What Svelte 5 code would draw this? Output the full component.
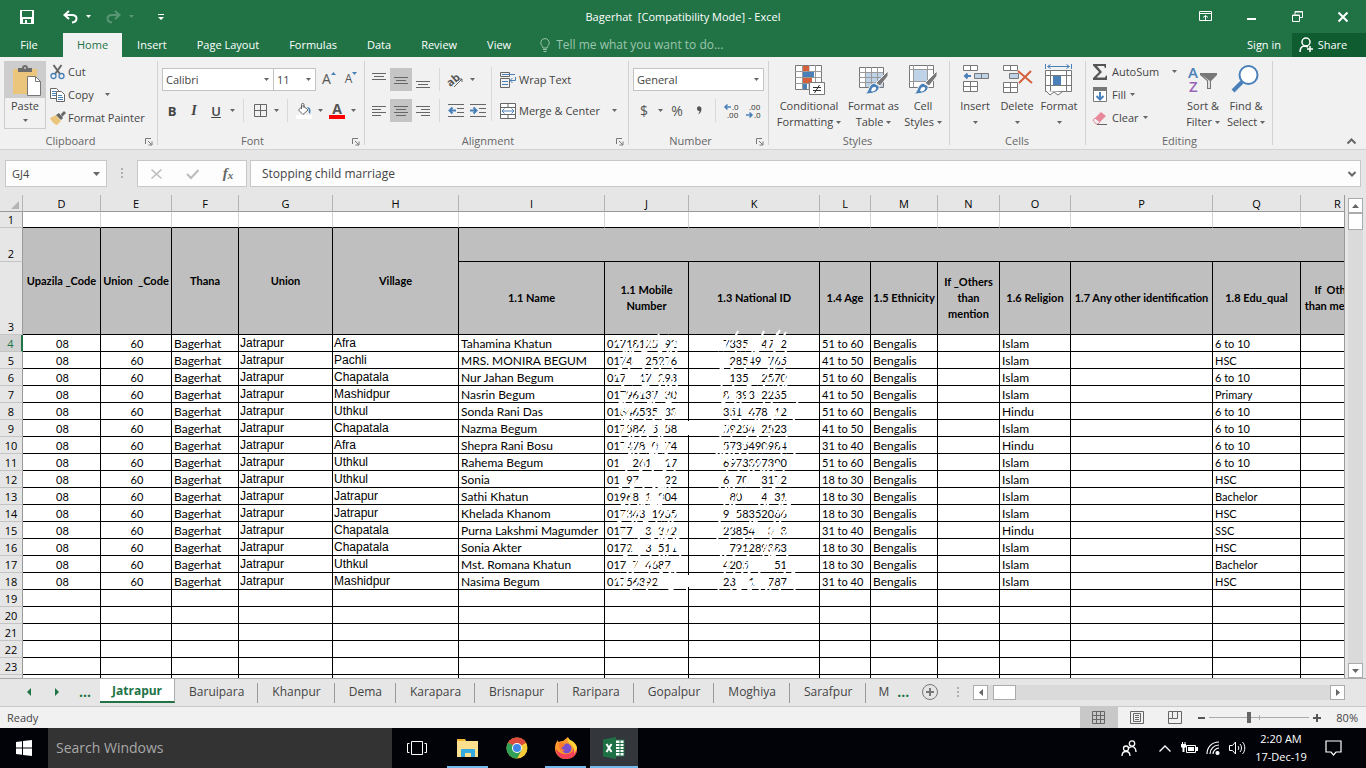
<script>
  const columns = [
    { id: 'D', width: 78 },
    { id: 'E', width: 71 },
    { id: 'F', width: 67 },
    { id: 'G', width: 94 },
    { id: 'H', width: 126 },
    { id: 'I', width: 146 },
    { id: 'J', width: 84 },
    { id: 'K', width: 131 },
    { id: 'L', width: 51 },
    { id: 'M', width: 67 },
    { id: 'N', width: 62 },
    { id: 'O', width: 71 },
    { id: 'P', width: 142 },
    { id: 'Q', width: 88 },
    { id: 'R', width: 74 }
  ]

  const mergedHeads = ['Upazila _Code', 'Union  _Code', 'Thana', 'Union', 'Village']
  const heads = [
    '1.1 Name', '1.1 Mobile\nNumber', '1.3 National ID', '1.4 Age', '1.5 Ethnicity',
    'If _Others\nthan\nmention', '1.6 Religion', '1.7 Any other identification',
    '1.8 Edu_qual', 'If  Others\nthan mention'
  ]

  // village, name, mobile, national id, age, religion, education
  // "_" is a digit that has been wiped out
  const people = [
    ['Afra', 'Tahamina Khatun', '01718125_92', '7335__47_2', '51 to 60', 'Islam', '6 to 10'],
    ['Pachli', 'MRS. MONIRA BEGUM', '0174__25276', '_28549_765', '41 to 50', 'Islam', 'HSC'],
    ['Chapatala', 'Nur Jahan Begum', '017__17_293', '_135__2570', '51 to 60', 'Islam', '6 to 10'],
    ['Mashidpur', 'Nasrin Begum', '01796137_30', '8_393_2235', '41 to 50', 'Islam', 'Primary'],
    ['Uthkul', 'Sonda Rani Das', '01646535_33', '351_478_12', '51 to 60', 'Hindu', '6 to 10'],
    ['Chapatala', 'Nazma Begum', '017584_5_58', '59254_2523', '41 to 50', 'Islam', '6 to 10'],
    ['Afra', 'Shepra Rani Bosu', '017478_0_74', '5735490984', '31 to 40', 'Hindu', '6 to 10'],
    ['Uthkul', 'Rahema Begum', '01__261__17', '6973397390', '51 to 60', 'Islam', '6 to 10'],
    ['Uthkul', 'Sonia', '01_97____22', '6_70__3172', '18 to 30', 'Islam', 'HSC'],
    ['Jatrapur', 'Sathi Khatun', '01968_1_804', '_80___4_31', '18 to 30', 'Islam', 'Bachelor'],
    ['Jatrapur', 'Khelada Khanom', '017343_1935', '9_58352086', '18 to 30', 'Islam', 'HSC'],
    ['Chapatala', 'Purna Lakshmi Magumder', '0177__3_312', '23854__3_3', '31 to 40', 'Hindu', 'SSC'],
    ['Chapatala', 'Sonia Akter', '0172__3_511', '_791289383', '18 to 30', 'Islam', 'HSC'],
    ['Uthkul', 'Mst. Romana Khatun', '017_7_4687_', '4205____51', '18 to 30', 'Islam', 'Bachelor'],
    ['Mashidpur', 'Nasima Begum', '01756392___', '23__1__787', '31 to 40', 'Islam', 'HSC']
  ]
  const wipe = (digits) => digits.replaceAll('_', '\u2007')

  const emptyRows = [19, 20, 21, 22, 23, 24]
  const menu = ['Insert', 'Page Layout', 'Formulas', 'Data', 'Review', 'View']
  const sheets = ['Baruipara', 'Khanpur', 'Dema', 'Karapara', 'Brisnapur', 'Raripara', 'Gopalpur', 'Moghiya', 'Sarafpur']

  // eraser strokes over the two number columns
  let seed = 7
  function rand() {
    seed = (seed * 16807) % 2147483647
    return seed / 2147483647
  }
  function strokes(count, x, w, y, h) {
    let d = ''
    for (let i = 0; i < count; i++) {
      const len = 5 + rand() * 9
      d += `M${(x + rand() * w).toFixed(0)} ${(y + rand() * h).toFixed(0)}l${(len / 2).toFixed(0)} ${(-len).toFixed(0)}`
    }
    return d
  }
  const scratches = strokes(260, 12, 60, 10, 262) + strokes(225, 111, 80, 10, 262) + 'M84 88v14M84 242v12M83 256v14M74 268h8'

  let zoom = $state(80)
</script>

{#snippet arrow()}
  <svg class="arrow" width="5" height="3" viewBox="0 0 5 3"><path d="M0 0h5L2.500 3z" fill="currentColor" /></svg>
{/snippet}

{#snippet launcher()}
  <svg class="launcher" width="8" height="8" viewBox="0 0 8 8" fill="none" stroke="#777"><path d="M.5 6V.5H6M3 3l3.500 3.500M7 3.500V7H3.500" /></svg>
{/snippet}

{#snippet lines(rows)}
  <svg width="16" height="16" viewBox="0 0 16 16" stroke="#666">
    {#each rows as [x1, x2, y]}<path d="M{x1} {y}.5H{x2}" />{/each}
  </svg>
{/snippet}

{#snippet brush()}
  <path d="M30 7v5l-8 10-4-3z" fill="#777" stroke="#f1f1f1" />
  <path d="M16 19l5 3c1 4-3 8-14 8 4-2 3-9 9-11z" fill="#4a80b8" stroke="#f1f1f1" />
  <path d="M14 24c2-2 5-1 4 1-1 2-3 3-5 2z" fill="#fff" />
{/snippet}

<div class="app">
  <header>
    <div class="titlebar">
      <div class="quick">
        <button class="q-save" aria-label="Save">
          <svg width="14" height="14" viewBox="0 0 14 14"><path fill-rule="evenodd" d="M0 0h14v14H0zM2 1v6h10V1zM3 9v4h2v-3h2v3h4V9z" fill="#fff" /></svg>
        </button>
        <button class="q-undo" aria-label="Undo">
          <svg width="15" height="14" viewBox="0 0 15 14" fill="none" stroke="#fff" stroke-width="2"><path d="M6 1L1.500 5 6 9M2 5h7c6 0 6 7 0 7.500" /></svg>
        </button>
        <button class="q-more" aria-label="Undo history">{@render arrow()}</button>
        <button class="q-undo dim" aria-label="Redo">
          <svg width="15" height="14" viewBox="0 0 15 14" fill="none" stroke="#fff" stroke-width="2"><path d="M9 1l4.500 4L9 9M13 5H6C0 5 0 12 6 12.500" /></svg>
        </button>
        <button class="q-more dim" aria-label="Redo history">{@render arrow()}</button>
        <button class="q-custom" aria-label="Customize toolbar">
          <svg width="6" height="6" viewBox="0 0 6 6"><path d="M0 0h6v1H0zM0 3h6L3 6z" fill="#fff" /></svg>
        </button>
      </div>
      <div class="title">Bagerhat&nbsp; [Compatibility Mode] - Excel</div>
      <div class="window-buttons">
        <button aria-label="Ribbon display options">
          <svg width="13" height="11" viewBox="0 0 13 11" fill="none" stroke="#fff"><path d="M.5.5h12v9H.5zM.5 2.500h12M6.500 9V4.500M4 6.500l2.500-2 2.500 2" /></svg>
        </button>
        <button aria-label="Minimize"><svg width="9" height="10" viewBox="0 0 9 10"><path d="M0 6h9v2H0z" fill="#fff" /></svg></button>
        <button aria-label="Restore">
          <svg width="11" height="11" viewBox="0 0 11 11" fill="none" stroke="#fff"><path d="M.5 4h7v6.500h-7zM0 4.500h8M3 3.500V.5h7.500v6H8M3 1h8" /></svg>
        </button>
        <button aria-label="Close"><svg width="10" height="10" viewBox="0 0 10 10" stroke="#fff" stroke-width="2"><path d="M.5.5l9 9M9.500.5l-9 9" /></svg></button>
      </div>
    </div>

    <nav class="menu">
      <button class="file">File</button>
      <button class="active">Home</button>
      {#each menu as item}
        <button>{item}</button>
      {/each}
      <label class="tell">
        <svg width="10" height="14" viewBox="0 0 10 14" fill="none" stroke="#9cc5ad"><path d="M3 10C3 8 .8 7.500.8 4.800a4.200 4.200 0 018.400 0C9.200 7.500 7 8 7 10zM3 11.500h4M3.500 13.500h3" /></svg>
        <input placeholder="Tell me what you want to do..." />
      </label>
      <button class="signin">Sign in</button>
      <button class="share">
        <svg width="15" height="16" viewBox="0 0 15 16" fill="none" stroke="#fff" stroke-width="1.500"><circle cx="7" cy="5" r="4" /><path d="M1 15c0-4 2-6 5-6l3 1M11 9v6M8 12h6" /></svg>
        Share
      </button>
    </nav>
  </header>

  <section class="ribbon">
    <div class="group clipboard">
      <div class="content">
        <button class="paste">
          <span class="paste-icon">
            <svg width="30" height="32" viewBox="0 0 30 32">
              <path d="M1 5h24v25H1z" fill="#ecc57c" />
              <path d="M6 8V4h4c0-4 6-4 6 0h4v4z" fill="#6d6d6d" />
              <circle cx="13" cy="4" r="1" fill="#cdcdcd" />
              <path d="M15.500 12.500h8l5 5v14h-13z" fill="#fff" stroke="#777" />
              <path d="M23.500 12.500v5h5" fill="none" stroke="#777" />
            </svg>
          </span>
          <span>Paste</span>
          {@render arrow()}
        </button>
        <div class="stack">
          <button>
            <svg width="16" height="16" viewBox="0 0 16 16" fill="none"><path d="M3.500 1l6.500 9M11.500 1L5 10" stroke="#666" stroke-width="2" /><circle cx="3.500" cy="12" r="2.500" stroke="#4a80b8" stroke-width="1.300" /><circle cx="11.500" cy="12" r="2.500" stroke="#4a80b8" stroke-width="1.300" /></svg>
            Cut
          </button>
          <button>
            <svg width="16" height="16" viewBox="0 0 16 16" fill="#fff" stroke="#666"><path d="M.5 1.500h6l2 2v8h-8z" /><path d="M2 4.500h4M2 6.500h4M2 8.500h4" stroke="#4a80b8" /><path d="M6.500 4.500h5l3 3v7h-8z" /><path d="M8 8.500h4M8 10.500h5M8 12.500h5" stroke="#4a80b8" /></svg>
            Copy <span class="gap">{@render arrow()}</span>
          </button>
          <button>
            <svg width="16" height="16" viewBox="0 0 16 16"><path d="M0 8l6-3 5 6-4 4c-2 0-5-3-7-7z" fill="#ecc57c" /><path d="M6 5l3-2 4 5-2 2zM11 4l3-3 2 2-4 4z" fill="#666" /></svg>
            Format Painter
          </button>
        </div>
      </div>
      <div class="caption launch">Clipboard {@render launcher()}</div>
    </div>

    <div class="group font">
      <div class="content rows">
        <div class="row">
          <span class="select font-name">
            <select aria-label="Font"><option>Calibri</option></select>{@render arrow()}
          </span>
          <span class="select font-size">
            <select aria-label="Font size"><option>11</option></select>{@render arrow()}
          </span>
          <button class="icon grow" aria-label="Increase font size">A<svg width="5" height="3" viewBox="0 0 5 3"><path d="M0 3h5L2.500 0z" fill="#4a80b8" /></svg></button>
          <button class="icon grow shrink" aria-label="Decrease font size">A<svg width="5" height="3" viewBox="0 0 5 3"><path d="M0 0h5L2.500 3z" fill="#4a80b8" /></svg></button>
        </div>
        <div class="row">
          <button class="icon glyph"><b>B</b></button>
          <button class="icon glyph"><i>I</i></button>
          <button class="icon glyph"><u>U</u></button>
          <button class="drop" aria-label="Underline style">{@render arrow()}</button>
          <span class="sep"></span>
          <button class="icon" aria-label="Borders">
            <svg width="13" height="13" viewBox="0 0 13 13" fill="none" stroke="#666"><path d="M.5.5h12v12H.5zM6.500.5v12M.5 6.500h12" /></svg>
          </button>
          <button class="drop" aria-label="Border style">{@render arrow()}</button>
          <span class="sep"></span>
          <button class="icon" aria-label="Fill color">
            <svg width="16" height="16" viewBox="0 0 16 16"><path d="M2.500 7L7 2.500l5 4.500-5 4.500z" fill="#fff" stroke="#666" /><path d="M5.500 6V1.500c0-1.500 2.500-1.500 2.500 0V5" fill="none" stroke="#666" /><path d="M11 4c4 0 4 4 3 7-1-1-2-2-1-4z" fill="#4a80b8" /><path d="M0 12h16v4H0z" fill="#fff" /></svg>
          </button>
          <button class="drop" aria-label="Fill colors">{@render arrow()}</button>
          <button class="icon font-color" aria-label="Font color"><b>A</b></button>
          <button class="drop" aria-label="Font colors">{@render arrow()}</button>
        </div>
      </div>
      <div class="caption launch">Font {@render launcher()}</div>
    </div>

    <div class="group alignment">
      <div class="content">
        <div class="rows">
          <div class="row">
            <button class="icon" aria-label="Top align">{@render lines([[1, 15, 1], [3, 13, 4], [1, 15, 7]])}</button>
            <button class="icon on" aria-label="Middle align">{@render lines([[1, 15, 5], [3, 13, 8], [1, 15, 11]])}</button>
            <button class="icon" aria-label="Bottom align">{@render lines([[1, 15, 9], [3, 13, 12], [1, 15, 15]])}</button>
            <span class="sep"></span>
            <button class="icon" aria-label="Orientation">
              <svg width="18" height="16" viewBox="0 0 18 16"><text x="0" y="12" font-size="11" font-weight="bold" fill="#555" transform="rotate(-40 6 9)">ab</text><path d="M7 15l8-8M12 7h3v3" fill="none" stroke="#666" /></svg>
            </button>
            <button class="drop" aria-label="Orientation options">{@render arrow()}</button>
          </div>
          <div class="row">
            <button class="icon" aria-label="Align left">{@render lines([[1, 15, 3], [1, 10, 6], [1, 15, 9], [1, 10, 12]])}</button>
            <button class="icon on" aria-label="Center">{@render lines([[1, 15, 3], [3, 13, 6], [1, 15, 9], [3, 13, 12]])}</button>
            <button class="icon" aria-label="Align right">{@render lines([[1, 15, 3], [6, 15, 6], [1, 15, 9], [6, 15, 12]])}</button>
            <span class="sep"></span>
            <button class="icon" aria-label="Decrease indent">
              <svg width="16" height="16" viewBox="0 0 16 16" fill="none" stroke="#666"><path d="M0 1.500h16M9 5.500h7M9 9.500h7M0 13.500h16" /><path d="M8 7.500H2M4.500 4.500l-3 3 3 3" stroke="#4a80b8" stroke-width="2" /></svg>
            </button>
            <button class="icon" aria-label="Increase indent">
              <svg width="16" height="16" viewBox="0 0 16 16" fill="none" stroke="#666"><path d="M0 1.500h16M9 5.500h7M9 9.500h7M0 13.500h16" /><path d="M0 7.500h6M3.500 4.500l3 3-3 3" stroke="#4a80b8" stroke-width="2" /></svg>
            </button>
          </div>
        </div>
        <span class="sep tall"></span>
        <div class="rows wide">
          <button class="row">
            <svg width="16" height="16" viewBox="0 0 16 16" fill="none" stroke="#666"><path d="M.5.5h9v4h-9zM.5 6.500h9v9h-9z" /><path d="M2 2.500h13M2 9.500h6M2 12.500h6M15.500 5v3.500H10M12.500 6L10 8.500l2.500 2.500" stroke="#4a80b8" /></svg>
            Wrap Text
          </button>
          <button class="row">
            <svg width="16" height="16" viewBox="0 0 16 16" fill="#fff" stroke="#666"><path d="M.5.5h15v15H.5zM.5 4.500h15M.5 11.500h15M8 .5v4M8 11.500v4" /><path d="M2 8h12M4.500 5.500L2 8l2.500 2.500M11.500 5.500L14 8l-2.500 2.500" fill="none" stroke="#4a80b8" /></svg>
            Merge &amp; Center <span class="gap">{@render arrow()}</span>
          </button>
        </div>
      </div>
      <div class="caption launch">Alignment {@render launcher()}</div>
    </div>

    <div class="group number">
      <div class="content rows">
        <div class="row">
          <span class="select format">
            <select aria-label="Number format"><option>General</option></select>{@render arrow()}
          </span>
        </div>
        <div class="row">
          <button class="icon sign">$</button>
          <button class="drop" aria-label="Currency">{@render arrow()}</button>
          <button class="icon sign">%</button>
          <button class="icon sign" aria-label="Comma style"><svg width="5" height="9" viewBox="0 0 5 9"><path d="M0 2.500C0-.5 4.500-.5 4.500 3c0 3-2 5-3.500 5.500C2 7 2.500 6 2.500 5 1 5.500 0 4 0 2.500z" fill="#555" /></svg></button>
          <span class="sep"></span>
          <button class="icon" aria-label="Increase decimal">
            <svg width="16" height="16" viewBox="0 0 16 16"><text x="8" y="7" font-size="8" fill="#333">.0</text><text x="3" y="15" font-size="8" fill="#333">.00</text><path d="M7 4H1M3.500 1.500L1 4l2.500 2.500" fill="none" stroke="#4a80b8" stroke-width="1.500" /></svg>
          </button>
          <button class="icon" aria-label="Decrease decimal">
            <svg width="16" height="16" viewBox="0 0 16 16"><text x="3" y="7" font-size="8" fill="#333">.00</text><text x="8" y="15" font-size="8" fill="#333">.0</text><path d="M0 12h6M3.500 9.500L6 12l-2.500 2.500" fill="none" stroke="#4a80b8" stroke-width="1.500" /></svg>
          </button>
        </div>
      </div>
      <div class="caption launch">Number {@render launcher()}</div>
    </div>

    <div class="group styles">
      <div class="content">
        <button class="big conditional">
          <svg width="32" height="32" viewBox="0 0 32 32">
            <path d="M2.500 1.500h26v24h-26z" fill="#fff" stroke="#777" />
            <path d="M9.500 1v25M16 1v25M22.500 1v25M2 7.500h27M2 13.500h27M2 19.500h27" stroke="#999" fill="none" />
            <path d="M10 2h6v5h-6zM10 14h9v5h-9z" fill="#d65f3c" /><path d="M10 8h11v5H10zM10 20h4v5h-4z" fill="#4a80b8" />
            <path d="M16.500 18.500h15v12h-15z" fill="#fff" stroke="#777" />
            <path d="M20 23.500h8M20 26.500h8M26.500 21l-5 8" stroke="#333" />
          </svg>
          <span>Conditional</span><span>Formatting {@render arrow()}</span>
        </button>
        <button class="big table-style">
          <svg width="32" height="32" viewBox="0 0 32 32">
            <path d="M1.500 3.500h24v20h-24z" fill="#fff" stroke="#777" /><path d="M8 9h17v14H8z" fill="#bed2e8" />
            <path d="M7.500 3v20M13.500 3v20M19.500 3v20M1 8.500h24M1 13.500h24M1 18.500h24" stroke="#999" fill="none" />
            {@render brush()}
          </svg>
          <span>Format as</span><span>Table {@render arrow()}</span>
        </button>
        <button class="big cell-style">
          <svg width="32" height="32" viewBox="0 0 32 32">
            <path d="M2.500 1.500h24v22h-24z" fill="#fff" stroke="#777" /><path d="M7 6h14v12H7z" fill="#bed2e8" />
            <path d="M6.500 1v22M20.500 1v22M2 5.500h24M2 17.500h24" stroke="#999" fill="none" />
            {@render brush()}
          </svg>
          <span>Cell</span><span>Styles {@render arrow()}</span>
        </button>
      </div>
      <div class="caption">Styles</div>
    </div>

    <div class="group cells">
      <div class="content">
        <button class="big">
          <svg width="32" height="32" viewBox="0 0 32 32" fill="#fff" stroke="#777">
            <path d="M4.500 1.500h14v5h-14zM11.500 1.500v5M4.500 17.500h14v10h-14zM11.500 17.500v10M4.500 22.500h14" />
            <path d="M15.500 9.500h14v5h-14zM22.500 9.500v5" fill="#bed2e8" /><path d="M12 12H6M8.500 9.500L6 12l2.500 2.500" fill="none" stroke="#4a80b8" stroke-width="2" />
          </svg>
          <span>Insert</span><span>{@render arrow()}</span>
        </button>
        <button class="big">
          <svg width="32" height="32" viewBox="0 0 32 32" fill="#fff" stroke="#777">
            <path d="M2.500 1.500h14v5h-14zM9.500 1.500v5M2.500 18.500h14v10h-14zM9.500 18.500v10M2.500 23.500h14" />
            <path d="M8.500 9.500h9v5h-9z" fill="#bed2e8" /><path d="M17 7l14 12M30 7L18 19" fill="none" stroke="#d65f3c" stroke-width="2" />
          </svg>
          <span>Delete</span><span>{@render arrow()}</span>
        </button>
        <button class="big">
          <svg width="32" height="32" viewBox="0 0 32 32" fill="#fff" stroke="#777">
            <path d="M2.500 6.500h26v21h-26zM7.500 6.500v21M23.500 6.500v21M2.500 11.500h26M2.500 21.500h26" /><path d="M10 12h8v9h-8z" fill="#4a80b8" stroke="none" />
            <path d="M3 27l4 4 4-3 4 3 4-3" />
            <path d="M2.500 0v5M28.500 0v5M5 2.500h21M7.500.5l-3 2 3 2M23.500.5l3 2-3 2" fill="none" stroke="#4a80b8" />
          </svg>
          <span>Format</span><span>{@render arrow()}</span>
        </button>
      </div>
      <div class="caption">Cells</div>
    </div>

    <div class="group editing">
      <div class="content">
        <div class="stack">
          <button>
            <svg width="16" height="16" viewBox="0 0 16 16"><path d="M1 0h13v4h-1l-1-2H5l5 6-5.500 5.500H13l1-2h1V16H1v-2l6-6-6-6.500z" fill="#555" /></svg>
            AutoSum <span class="gap">{@render arrow()}</span>
          </button>
          <button>
            <svg width="16" height="16" viewBox="0 0 16 16"><path d="M1.500 1.500h13v13h-13z" fill="#fff" stroke="#777" /><path d="M1 0h14v4H1z" fill="#777" /><path d="M8 5v7M4.500 9L8 12.500 11.500 9" fill="none" stroke="#4a80b8" stroke-width="2" /></svg>
            Fill {@render arrow()}
          </button>
          <button>
            <svg width="16" height="16" viewBox="0 0 16 16"><path d="M1 10l8-8 5 4-8 8z" fill="#e8899a" /><path d="M1 10l2-2 5 4-2 2H4z" fill="#f1f1f1" stroke="#e8899a" /><path d="M5 14.500h10" stroke="#666" /></svg>
            Clear {@render arrow()}
          </button>
        </div>
        <button class="big sort">
          <svg width="32" height="32" viewBox="0 0 32 32"><text x="1" y="14" font-size="15" font-weight="600" fill="#4a80b8">A</text><text x="2" y="28" font-size="15" font-weight="600" fill="#9866b8">Z</text><path d="M13 9h17v2l-6 6v8h-4v-8l-7-6z" fill="#777" /><path d="M15 11l6 5.500V24h2v-7z" fill="#ddd" /></svg>
          <span>Sort &amp;</span><span>Filter {@render arrow()}</span>
        </button>
        <button class="big find">
          <svg width="32" height="32" viewBox="0 0 32 32"><circle cx="18.500" cy="11" r="9" fill="#fff" stroke="#4a80b8" stroke-width="2" /><path d="M12 18l-9 9" stroke="#4a80b8" stroke-width="4" /></svg>
          <span>Find &amp;</span><span>Select {@render arrow()}</span>
        </button>
      </div>
      <div class="caption">Editing</div>
    </div>
    <button class="collapse" aria-label="Collapse the ribbon">
      <svg width="9" height="6" viewBox="0 0 9 6" fill="none" stroke="#666" stroke-width="2"><path d="M.5 5.500l4-4 4 4" /></svg>
    </button>
  </section>

  <section class="formula">
    <div class="name-box">
      <input aria-label="Name box" value="GJ4" />
      <button aria-label="Names"><svg width="7" height="4" viewBox="0 0 7 4"><path d="M0 0h7L3.500 4z" fill="#666" /></svg></button>
    </div>
    <span class="dots"></span>
    <div class="fx">
      <button aria-label="Cancel"><svg width="11" height="10" viewBox="0 0 11 10" stroke="#bbb" stroke-width="1.500"><path d="M.5.5l10 9M10.500.5l-10 9" /></svg></button>
      <button aria-label="Enter"><svg width="13" height="10" viewBox="0 0 13 10" fill="none" stroke="#bbb" stroke-width="2"><path d="M1 5l4 4 7.500-8" /></svg></button>
      <button class="fn">f<small>x</small></button>
    </div>
    <div class="formula-input">
      <input aria-label="Formula" value="Stopping child marriage" />
      <button aria-label="Expand formula bar"><svg width="8" height="6" viewBox="0 0 8 6" fill="none" stroke="#666" stroke-width="2"><path d="M.5 1L4 4.500 7.500 1" /></svg></button>
    </div>
  </section>

  <main>
    <div class="grid">
      <table>
        <colgroup>
          <col style="width: 23px" />
          {#each columns as col}<col style="width: {col.width}px" />{/each}
        </colgroup>
        <thead>
          <tr>
            <th class="corner" aria-label="Select all"><svg width="8" height="8" viewBox="0 0 8 8"><path d="M8 0v8H0z" fill="#b4b4b4" /></svg></th>
            {#each columns as col}<th>{col.id}</th>{/each}
          </tr>
        </thead>
        <tbody>
          <tr class="first">
            <th>1</th>
            {#each columns as col}<td></td>{/each}
          </tr>
          <tr class="band">
            <th>2</th>
            {#each mergedHeads as head}<td class="head" rowspan="2">{head}</td>{/each}
            <td class="head" colspan="10"></td>
          </tr>
          <tr class="heads">
            <th>3</th>
            {#each heads as head}<td class="head">{head}</td>{/each}
          </tr>
          {#each people as [village, name, mobile, national, age, religion, education], i}
            <tr>
              <th class:current={i === 0}>{i + 4}</th>
              <td class="num center">08</td>
              <td class="num center">60</td>
              <td>Bagerhat</td>
              <td class="arial">Jatrapur</td>
              <td class="arial">{village}</td>
              <td>{name}</td>
              <td class="num">{wipe(mobile)}</td>
              <td class="num center">{wipe(national)}</td>
              <td class="num">{age}</td>
              <td>Bengalis</td>
              <td></td>
              <td>{religion}</td>
              <td></td>
              <td class="num">{education}</td>
              <td></td>
            </tr>
          {/each}
          {#each emptyRows as row}
            <tr>
              <th>{row}</th>
              {#each columns as col}<td></td>{/each}
            </tr>
          {/each}
        </tbody>
      </table>
      <svg class="scratches" width="215" height="280" viewBox="0 0 215 280"><path d={scratches} fill="none" stroke="#fff" stroke-width="2" /></svg>
    </div>
    <div class="vscroll">
      <button aria-label="Scroll up"><svg width="7" height="4" viewBox="0 0 7 4"><path d="M0 4h7L3.500 0z" fill="#666" /></svg></button>
      <span class="thumb"></span>
      <button class="down" aria-label="Scroll down"><svg width="7" height="4" viewBox="0 0 7 4"><path d="M0 0h7L3.500 4z" fill="#666" /></svg></button>
    </div>
  </main>

  <footer>
    <div class="sheets">
      <button class="step" aria-label="Previous sheet"><svg width="4" height="8" viewBox="0 0 4 8"><path d="M4 0v8L0 4z" fill="#217346" /></svg></button>
      <button class="step" aria-label="Next sheet"><svg width="4" height="8" viewBox="0 0 4 8"><path d="M0 0v8l4-4z" fill="#217346" /></svg></button>
      <button class="step more">...</button>
      <button class="sheet current">Jatrapur</button>
      {#each sheets as sheet}
        <button class="sheet">{sheet}</button>
      {/each}
      <button class="sheet cut">M</button>
      <button class="step more">...</button>
      <button class="add" aria-label="New sheet"><svg width="16" height="16" viewBox="0 0 16 16" fill="none" stroke="#777"><circle cx="8" cy="8" r="7.500" /><path d="M8 4v8M4 8h8" stroke-width="2" /></svg></button>
      <span class="dots"></span>
      <div class="hscroll">
        <button aria-label="Scroll left"><svg width="4" height="7" viewBox="0 0 4 7"><path d="M4 0v7L0 3.500z" fill="#666" /></svg></button>
        <span class="thumb"></span>
        <button class="right" aria-label="Scroll right"><svg width="4" height="7" viewBox="0 0 4 7"><path d="M0 0v7l4-3.500z" fill="#666" /></svg></button>
      </div>
    </div>

    <div class="status">
      <span class="ready">Ready</span>
      <button class="view on" aria-label="Normal view"><svg width="14" height="13" viewBox="0 0 14 13" fill="none" stroke="#666"><path d="M.5.5h12v12H.5zM4.500.5v12M8.500.5v12M.5 4.500h12M.5 8.500h12" /></svg></button>
      <button class="view" aria-label="Page layout view"><svg width="14" height="13" viewBox="0 0 14 13" fill="none" stroke="#666"><path d="M.5.5h13v12H.5zM3.500 2.500h7v8h-7zM5 4.500h4M5 6.500h4M5 8.500h4" /></svg></button>
      <button class="view" aria-label="Page break view"><svg width="14" height="13" viewBox="0 0 14 13" fill="none" stroke="#666"><path d="M.5.5h13v12H.5zM4.500.5v7h5v-7M.5 7.500h4" /></svg></button>
      <button class="zoom-step" aria-label="Zoom out"><svg width="7" height="7" viewBox="0 0 7 7"><path d="M0 3h7v2H0z" fill="#555" /></svg></button>
      <input type="range" min="0" max="200" bind:value={zoom} aria-label="Zoom" />
      <button class="zoom-step" aria-label="Zoom in"><svg width="8" height="8" viewBox="0 0 8 8"><path d="M0 3h3V0h2v3h3v2H5v3H3V5H0z" fill="#555" /></svg></button>
      <span class="percent">{zoom}%</span>
    </div>
  </footer>

  <div class="taskbar">
    <button class="start" aria-label="Start"><svg width="16" height="16" viewBox="0 0 16 16"><path d="M0 2l6-.8v6.300H0zM7 1l9-1v7.500H7zM0 8.500h6v6.300L0 14zM7 8.500h9V16l-9-1z" fill="#fff" /></svg></button>
    <input class="search" placeholder="Search Windows" aria-label="Search Windows" />
    <button class="task overview" aria-label="Task view"><svg width="20" height="14" viewBox="0 0 20 14" fill="none" stroke="#fff"><path d="M4.500.5h11v13h-11zM2.500 2.500h-2v9h2M17.500 2.500h2v9h-2" /></svg></button>
    <button class="task open" aria-label="File Explorer">
      <svg width="22" height="22" viewBox="0 0 22 22"><path d="M0 2h8l1 2h12v16H0z" fill="#fde08d" /><path d="M0 2h8v2H0z" fill="#f3b72f" /><path d="M4 20v-7q0-1 1-1h12q1 0 1 1v7h-4v-4H8v4z" fill="#35a9e0" /></svg>
    </button>
    <button class="task" aria-label="Chrome">
      <svg width="22" height="22" viewBox="0 0 22 22"><circle cx="11" cy="11" r="10.500" fill="#f7cb3a" /><path d="M11 11L1.900 5.700a10.500 10.500 0 0118.200 0z" fill="#dd4b3e" /><path d="M1.900 5.700A10.500 10.500 0 0011 21.500l5-9z" fill="#31a056" /><circle cx="11" cy="11" r="5" fill="#fff" /><circle cx="11" cy="11" r="4" fill="#4285e8" /></svg>
    </button>
    <button class="task open" aria-label="Firefox">
      <svg width="24" height="24" viewBox="0 0 24 24"><path d="M12 23C5 23 1 18 1 12c0-3 1-6 3-8 0 1 0 2 1 2 1-1 3-1 4-1 2-1 3-3 5-4 0 2 2 3 4 4 3 2 5 4 5 8 0 6-5 10-11 10z" fill="#ff9a2a" /><path d="M12 23C6 23 2 19 2 13c4 5 9 6 12 5 5-1 6-5 6-10 2 2 3 3 3 6 0 5-5 9-11 9z" fill="#f6405a" /><path d="M14 1c0 2 2 3 4 4 3 2 5 5 5 8l-3 5c1-5-1-8-4-10-2-2-3-4-2-7z" fill="#ffd23a" /><circle cx="12.500" cy="12.500" r="5" fill="#7a4fd0" /><path d="M5 7c2-1 5 0 6 2l-4 3 4 3c-4 1-7-2-6-8z" fill="#ff7a2a" /></svg>
    </button>
    <button class="task open selected" aria-label="Excel">
      <svg width="22" height="22" viewBox="0 0 22 22"><path d="M12 3h9v16h-9z" fill="#fff" stroke="#217346" /><path d="M12 6.500h9M12 9.500h9M12 12.500h9M12 15.500h9M17 3v16" stroke="#217346" /><path d="M0 2.500L13 0v22L0 19.500z" fill="#1e7145" /><path d="M3.500 7l5 8M8.500 7l-5 8" stroke="#fff" stroke-width="2" /></svg>
    </button>
    <div class="tray">
      <button class="people" aria-label="People"><svg width="16" height="17" viewBox="0 0 16 17" fill="none" stroke="#fff" stroke-width="1.300"><circle cx="5" cy="8.500" r="2.500" /><path d="M1 16c0-6 8-6 8 0" /><circle cx="11" cy="3.500" r="2.700" /><path d="M8 8c3-3 7-1 7 4" /></svg></button>
      <button aria-label="Hidden icons"><svg width="12" height="7" viewBox="0 0 12 7" fill="none" stroke="#fff" stroke-width="1.300"><path d="M.5 6.500L6 1l5.500 5.500" /></svg></button>
      <button aria-label="Battery"><svg width="17" height="12" viewBox="0 0 17 12"><path d="M5.500 3.500h9v7h-9z" fill="none" stroke="#fff" /><path d="M7 5h6v4H7zM15 5h2v4h-2zM0 2h5v3L3.500 6v4h-2V6L0 5zM1 0h1v2H1zM3.500 0h1v2h-1z" fill="#fff" /></svg></button>
      <button aria-label="Network"><svg width="14" height="14" viewBox="0 0 14 14" fill="none" stroke="#fff" stroke-width="1.200"><path d="M1 13C1 6 6 1 13 1M4 13c0-5 4-9 9-9M7 13c0-3 3-6 6-6" /><circle cx="11.500" cy="12" r="1.500" fill="#fff" /></svg></button>
      <button aria-label="Volume"><svg width="17" height="14" viewBox="0 0 17 14" fill="none" stroke="#fff"><path d="M.5 4.500h3L6.500 1v12L3.500 9.500h-3zM9 5c1 1 1 3 0 4M11 3c2 2 2 6 0 8M13.500 1c3 3 3 9 0 12" /></svg></button>
      <div class="clock"><span>2:20 AM</span><span>17-Dec-19</span></div>
      <button class="note" aria-label="Notifications"><svg width="17" height="16" viewBox="0 0 17 16" fill="none" stroke="#fff" stroke-width="1.200"><path d="M1 1h15v11h-5l-2.500 3L6 12H1z" /></svg></button>
    </div>
  </div>
</div>

<style>
  :global(body) {
    margin: 0;
    overflow: hidden;
  }

  .app {
    display: flex;
    flex-direction: column;
    height: 100vh;
    background: #e6e6e6;
    color: #444;
    font: 11px/16px 'Open Sans', 'Noto Sans', sans-serif;
  }

  .app :global(*) {
    box-sizing: border-box;
  }

  button,
  input,
  select {
    margin: 0;
    padding: 0;
    border: 0;
    background: none;
    color: inherit;
    font: inherit;
    white-space: nowrap;
  }

  button {
    display: flex;
    align-items: center;
    justify-content: center;
  }

  input {
    min-width: 0;
    outline: none;
  }

  svg {
    flex: none;
    display: block;
    overflow: visible;
  }

  .arrow {
    display: inline-block;
    color: #666;
  }

  header {
    background: #217346;
    color: #fff;
  }

  .titlebar {
    display: grid;
    grid-template-columns: 1fr auto 1fr;
    align-items: center;
    height: 33px;
  }

  .quick {
    display: flex;
    align-items: center;
    height: 30px;
    padding-left: 16px;
  }

  .quick .arrow {
    color: #fff;
  }

  .q-save {
    width: 22px;
    margin-right: 20px;
  }

  .q-undo {
    width: 24px;
  }

  .q-more {
    width: 13px;
    margin-right: 6px;
  }

  .q-custom {
    width: 30px;
    margin-left: 2px;
  }

  .dim {
    opacity: 0.25;
  }

  .window-buttons {
    display: flex;
    justify-content: flex-end;
    height: 30px;
  }

  .window-buttons button {
    width: 46px;
  }

  .menu {
    display: flex;
    height: 24px;
  }

  .menu button {
    padding: 0 15px;
  }

  .menu .file {
    width: 58px;
    margin-right: 5px;
  }

  .menu .active {
    padding: 0 14px;
    background: #f1f1f1;
    color: #217346;
  }

  .tell {
    display: flex;
    align-items: center;
    flex: 1;
    gap: 6px;
    padding-left: 14px;
  }

  .tell input {
    flex: 1;
    font-size: 12px;
  }

  .tell input::placeholder {
    color: #9cc5ad;
    opacity: 1;
  }

  .menu .signin {
    padding: 0 11px;
  }

  .menu .share {
    width: 74px;
    gap: 4px;
    padding: 0 12px 0 0;
    background: #0e5c2f;
  }

  .ribbon {
    display: flex;
    height: 93px;
    padding-top: 4px;
    background: #f1f1f1;
    border-bottom: 1px solid #d2d2d2;
  }

  .group {
    display: flex;
    flex-direction: column;
    flex: none;
    height: 84px;
    border-right: 1px solid #d2d2d2;
  }

  .content {
    display: flex;
    height: 74px;
  }

  .caption {
    display: flex;
    justify-content: center;
    position: relative;
    height: 10px;
    padding-right: 5px;
    line-height: 12px;
    color: #666;
  }

  .caption.launch {
    padding-right: 20px;
  }

  .launcher {
    position: absolute;
    right: 4px;
    top: 3px;
  }

  .clipboard {
    width: 158px;
    padding-left: 4px;
  }

  .font {
    width: 207px;
    padding-left: 3px;
  }

  .alignment {
    width: 264px;
    padding-left: 3px;
  }

  .number {
    width: 140px;
    padding-left: 4px;
  }

  .styles {
    width: 181px;
    padding-left: 2px;
  }

  .cells {
    width: 136px;
    padding-left: 4px;
  }

  .editing {
    width: 187px;
    padding-left: 6px;
  }

  .paste {
    flex-direction: column;
    justify-content: flex-start;
    width: 42px;
    height: 68px;
    border: 1px solid #cdcdcd;
    margin-right: 4px;
  }

  .paste > span {
    margin-bottom: 5px;
  }

  .paste-icon {
    display: flex;
    justify-content: center;
    align-self: stretch;
    height: 36px;
    padding: 2px 0 0 4px;
    background: #cdcdcd;
  }

  .paste > .paste-icon {
    margin-bottom: 0;
  }

  .stack {
    margin-top: -1px;
  }

  .stack button {
    height: 23px;
    gap: 4px;
  }

  .clipboard .stack button {
    gap: 2px;
  }

  .gap {
    display: flex;
    padding-left: 9px;
  }

  .rows {
    display: flex;
    flex-direction: column;
    gap: 8px;
    padding-top: 7px;
  }

  .row {
    display: flex;
    align-items: center;
    height: 23px;
  }

  .wide {
    padding-left: 8px;
  }

  .wide .row {
    gap: 3px;
    justify-content: flex-start;
  }

  .select {
    display: flex;
    align-items: center;
    position: relative;
    height: 23px;
    background: #fff;
    border: 1px solid #c3c3c3;
  }

  .select select {
    appearance: none;
    width: 100%;
    padding-left: 3px;
    outline: none;
  }

  .select .arrow {
    position: absolute;
    right: 4px;
    pointer-events: none;
  }

  .font-name {
    width: 112px;
    margin-left: 1px;
  }

  .font-size {
    width: 43px;
    margin-left: -1px;
    margin-right: 2px;
  }

  .format {
    width: 131px;
  }

  .icon {
    width: 22px;
    height: 23px;
  }

  .icon.on {
    background: #c5c5c5;
  }

  .drop {
    width: 11px;
    height: 23px;
  }

  .sep {
    align-self: stretch;
    width: 1px;
    margin: 0 5px;
    background: #d8d8d8;
  }

  .sep.tall {
    height: 54px;
    margin: 6px 0 0 2px;
    align-self: flex-start;
  }

  .grow {
    align-items: flex-start;
    font-size: 14px;
    line-height: 22px;
    color: #555;
  }

  .grow svg {
    margin-top: 4px;
  }

  .shrink {
    font-size: 12px;
  }

  .glyph {
    font-size: 13px;
    color: #444;
  }

  .glyph i {
    font-family: 'Liberation Serif', serif;
    font-size: 14px;
    font-weight: bold;
  }

  .glyph u {
    font-weight: 600;
  }

  .font-color b {
    width: 16px;
    height: 17px;
    border-bottom: 4px solid #f00;
    font-size: 14px;
    line-height: 14px;
    color: #555;
  }

  .sign {
    font-size: 14px;
    color: #555;
  }

  .big {
    flex-direction: column;
    justify-content: flex-start;
    width: 42px;
    padding-top: 3px;
  }

  .big svg:not(.arrow) {
    margin-bottom: 2px;
  }

  .big .arrow {
    vertical-align: 2px;
  }

  .conditional {
    width: 76px;
  }

  .table-style {
    width: 53px;
  }

  .cell-style {
    width: 46px;
  }

  .editing .stack {
    width: 89px;
  }

  .sort {
    width: 44px;
  }

  .collapse {
    align-self: flex-end;
    width: 30px;
    height: 16px;
    margin-left: auto;
  }

  .formula {
    display: flex;
    align-items: center;
    height: 45px;
    padding: 10px 5px 8px;
  }

  .formula > div {
    display: flex;
    height: 27px;
    background: #fdfdfd;
    border: 1px solid #c8c8c8;
  }

  .name-box {
    width: 102px;
  }

  .name-box input {
    flex: 1;
    padding-left: 6px;
  }

  .name-box button {
    width: 19px;
  }

  .dots {
    width: 2px;
    height: 11px;
    margin: 0 14px;
    background: repeating-linear-gradient(#b0b0b0 0 2px, transparent 2px 4px);
  }

  .formula .fx {
    width: 110px;
    margin-right: 3px;
  }

  .fx button {
    flex: 1;
  }

  .fn {
    font: italic bold 15px 'Liberation Serif', serif;
    color: #666;
  }

  .fn small {
    font-size: 11px;
    padding-top: 3px;
  }

  .formula-input {
    flex: 1;
  }

  .formula-input input {
    flex: 1;
    padding-left: 11px;
    font-size: 12px;
  }

  .formula-input button {
    width: 16px;
  }

  main {
    display: flex;
    flex: 1;
    min-height: 0;
    padding-right: 3px;
  }

  .grid {
    flex: 1;
    position: relative;
    overflow: hidden;
    border-right: 1px solid #999;
    background: #fff;
  }

  table {
    table-layout: fixed;
    width: 1374px;
    border-spacing: 0;
    color: #000;
    font: 12px/14px Lato, 'Open Sans', sans-serif;
  }

  th {
    height: 17px;
    padding: 2px 0 0;
    background: #e6e6e6;
    border-right: 1px solid #b4b4b4;
    border-bottom: 1px solid #999;
    font: 11px/14px 'Open Sans', sans-serif;
  }

  tbody th {
    border-right-color: #999;
    border-bottom-color: #c4c4c4;
    vertical-align: bottom;
  }

  .corner svg {
    margin: 2px 0 0 11px;
  }

  th.current {
    background: #d2d2d2;
    color: #217346;
    border-right: 2px solid #217346;
  }

  td {
    height: 17px;
    padding: 2px 0 0 2px;
    border-right: 1px solid #000;
    border-bottom: 1px solid #000;
    overflow: hidden;
    white-space: nowrap;
  }

  .first th,
  .first td {
    height: 16px;
    padding-top: 1px;
  }

  .first td {
    border-right-color: #d4d4d4;
  }

  .band th {
    height: 34px;
  }

  .heads th {
    height: 73px;
  }

  .head {
    padding: 0;
    background: #bfbfbf;
    text-align: center;
    font-size: 11px;
    font-weight: bold;
    line-height: 16px;
    white-space: pre;
  }

  .num {
    font-size: 11px;
  }

  .center {
    text-align: center;
  }

  .arial {
    padding: 0 0 0 1px;
    font-family: 'Liberation Sans', Arial, sans-serif;
  }

  .scratches {
    position: absolute;
    left: 604px;
    top: 138px;
    pointer-events: none;
  }

  .vscroll {
    display: flex;
    flex-direction: column;
    width: 15px;
    margin: 3px 0 0 3px;
    background: #dadada;
  }

  .vscroll button,
  .vscroll .thumb {
    height: 15px;
    background: #fff;
    border: 1px solid #ababab;
  }

  .vscroll .thumb {
    height: 17px;
  }

  .vscroll .down {
    margin-top: auto;
  }

  .sheets {
    display: flex;
    height: 28px;
    border-top: 1px solid #ababab;
    font-size: 12px;
  }

  .step {
    width: 28px;
    height: 26px;
  }

  .step:first-child {
    margin-left: 15px;
  }

  .more {
    color: #217346;
    font-weight: bold;
    font-size: 14px;
  }

  .sheet {
    height: 24px;
    padding: 2px 14px 0;
    position: relative;
  }

  .sheet:not(.current, .cut)::after {
    content: '';
    position: absolute;
    right: 0;
    top: 4px;
    bottom: 0;
    border-right: 1px solid #999;
  }

  .sheet.current {
    margin-left: 1px;
    padding: 2px 12px 0;
    background: #fff;
    border-right: 1px solid #ababab;
    border-bottom: 2px solid #217346;
    color: #217346;
    font-weight: bold;
  }

  .sheet.cut {
    padding: 2px 0 0 12px;
  }

  .add {
    width: 26px;
    height: 26px;
  }

  .sheets .dots {
    margin: 8px 14px;
  }

  .hscroll {
    display: flex;
    flex: 1;
    height: 15px;
    margin: 6px 21px 0 0;
    background: #dadada;
  }

  .hscroll button,
  .hscroll .thumb {
    width: 15px;
    background: #fff;
    border: 1px solid #ababab;
  }

  .hscroll .thumb {
    width: 23px;
    margin-left: 5px;
  }

  .hscroll .right {
    margin-left: auto;
  }

  .status {
    display: flex;
    align-items: center;
    height: 22px;
    padding: 0 8px 0 7px;
    background: #f1f1f1;
    border-top: 1px solid #c8c8c8;
  }

  .ready {
    flex: 1;
  }

  .view {
    width: 38px;
    height: 21px;
  }

  .view.on {
    background: #c8c8c8;
  }

  .zoom-step {
    width: 15px;
    height: 21px;
  }

  input[type='range'] {
    appearance: none;
    width: 100px;
    height: 11px;
    background:
      linear-gradient(#ababab, #ababab) center / 1px 5px no-repeat,
      linear-gradient(#ababab, #ababab) center / 100% 1px no-repeat;
  }

  input[type='range']::-webkit-slider-thumb {
    appearance: none;
    width: 4px;
    height: 11px;
    background: #666;
  }

  .percent {
    width: 34px;
    text-align: right;
  }

  .taskbar {
    display: flex;
    height: 40px;
    background: #010308;
    color: #fff;
  }

  .start {
    width: 48px;
  }

  .search {
    width: 344px;
    padding-left: 8px;
    background: #333;
    font-size: 14px;
  }

  .search::placeholder {
    color: #a8a8a8;
    opacity: 1;
  }

  .task {
    width: 41px;
    margin: 0 4px;
    border-bottom: 2px solid transparent;
    border-top: 2px solid transparent;
  }

  .task.overview {
    margin-right: 6px;
  }

  .task.open {
    border-bottom-color: #76b9ed;
  }

  .task.selected {
    width: 48px;
    margin: 0;
    background: #33373c;
    border-top-color: #33373c;
  }

  .tray {
    display: flex;
    align-items: center;
    margin-left: auto;
    padding-right: 17px;
  }

  .tray button {
    width: 24px;
  }

  .tray .people {
    margin-right: 12px;
  }

  .clock {
    display: flex;
    flex-direction: column;
    align-items: center;
    width: 64px;
    line-height: 18px;
  }

  .tray .note {
    width: 32px;
    margin-left: 4px;
  }
</style>
